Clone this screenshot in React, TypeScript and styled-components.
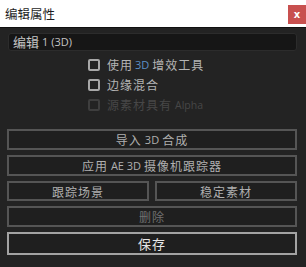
import React from 'react';
import styled, {createGlobalStyle} from 'styled-components';

const GlobalStyle = createGlobalStyle`
    html, body {
        margin: 0;
        padding: 0;
        background: #232323;
        font-family: "Noto Sans CJK SC", "Noto Sans", sans-serif;
    }
`;

const Window = styled.div`
    width: 306px;
    height: 267px;
    display: flex;
    flex-direction: column;
    background: #232323;
`;

const TitleBar = styled.div`
    height: 28px;
    flex-shrink: 0;
    background: #ffffff;
    display: flex;
    align-items: flex-start;
    justify-content: space-between;
    box-sizing: border-box;
    border-bottom: 1px solid #111;
`;

const Title = styled.div`
    font-size: 12.5px;
    color: #1e1e1e;
    margin: 5px 0 0 5px;
    line-height: 17px;
`;

const CloseButton = styled.div`
    width: 18px;
    height: 19px;
    margin-top: 5px;
    background: #c8504f;
    color: #fff;
    font-family: "DejaVu Sans", sans-serif;
    font-weight: bold;
    font-size: 10px;
    display: flex;
    align-items: center;
    justify-content: center;
    line-height: 1;
`;

const Body = styled.div`
    display: flex;
    flex-direction: column;
    padding: 5px 9px 0 7px;
`;

const NameField = styled.div`
    height: 18px;
    margin-left: 1px;
    box-sizing: border-box;
    background: #161616;
    border: 1px solid #2c2c2c;
    border-radius: 3px;
    color: #c4c4c4;
    font-size: 13px;
    line-height: 16px;
    padding-left: 4px;
    display: flex;
    align-items: center;

    small {
        font-family: "Open Sans", sans-serif;
        font-size: 11px;
        margin-left: 3px;
    }
`;

const Options = styled.div`
    display: flex;
    flex-direction: column;
    margin: 7px 0 0 81px;
    gap: 7px;
`;

const Option = styled.label<{ $disabled?: boolean }>`
    display: flex;
    align-items: center;
    height: 13px;
    font-size: 12px;
    letter-spacing: 1px;
    color: ${p => (p.$disabled ? '#474747' : '#b4b4b4')};

    b {
        font-weight: normal;
        font-family: "Open Sans", sans-serif;
        font-size: 11px;
        letter-spacing: 0;
        color: ${p => (p.$disabled ? '#474747' : '#5b8fc6')};
        margin: 0 3px 0 2px;
    }

    i {
        font-style: normal;
        font-family: "Open Sans", sans-serif;
        font-size: 10.5px;
        letter-spacing: 0;
        margin-left: 3px;
    }
`;

const Box = styled.span<{ $disabled?: boolean }>`
    width: 12px;
    height: 12px;
    box-sizing: border-box;
    border: 2px solid ${p => (p.$disabled ? '#3e3e3e' : '#a8a8a8')};
    border-radius: 2px;
    margin-right: 7px;
    flex-shrink: 0;
`;

const Buttons = styled.div`
    display: flex;
    flex-direction: column;
    gap: 5px;
    margin-top: 18px;
`;

const Row = styled.div`
    display: flex;
    gap: 6px;
`;

const Button = styled.div<{ $dim?: boolean; $main?: boolean }>`
    flex: 1;
    height: ${p => (p.$main ? '30px' : '20px')};
    box-sizing: border-box;
    border: 2px solid ${p => (p.$main ? '#a3a3a3' : '#555555')};
    background: #1f1f1f;
    display: flex;
    align-items: center;
    justify-content: center;
    font-size: ${p => (p.$main ? '13px' : '12px')};
    letter-spacing: 1px;
    color: ${p => (p.$dim ? '#707070' : p.$main ? '#e6e6e6' : '#b0b0b0')};

    b {
        font-weight: normal;
        font-family: "Open Sans", sans-serif;
        font-size: 11px;
        letter-spacing: 0;
        margin: 0 3px;
    }
`;

export default function App() {
    return (
        <Window>
            <GlobalStyle/>
            <TitleBar>
                <Title>编辑属性</Title>
                <CloseButton>x</CloseButton>
            </TitleBar>
            <Body>
                <NameField>编辑<small>1 (3D)</small></NameField>
                <Options>
                    <Option><Box/>使用<b>3D</b>增效工具</Option>
                    <Option><Box/>边缘混合</Option>
                    <Option $disabled><Box $disabled/>源素材具有<i>Alpha</i></Option>
                </Options>
                <Buttons>
                    <Button>导入<b>3D</b>合成</Button>
                    <Button>应用<b>AE 3D</b>摄像机跟踪器</Button>
                    <Row>
                        <Button>跟踪场景</Button>
                        <Button>稳定素材</Button>
                    </Row>
                    <Button $dim>删除</Button>
                    <Button $main>保存</Button>
                </Buttons>
            </Body>
        </Window>
    );
}
